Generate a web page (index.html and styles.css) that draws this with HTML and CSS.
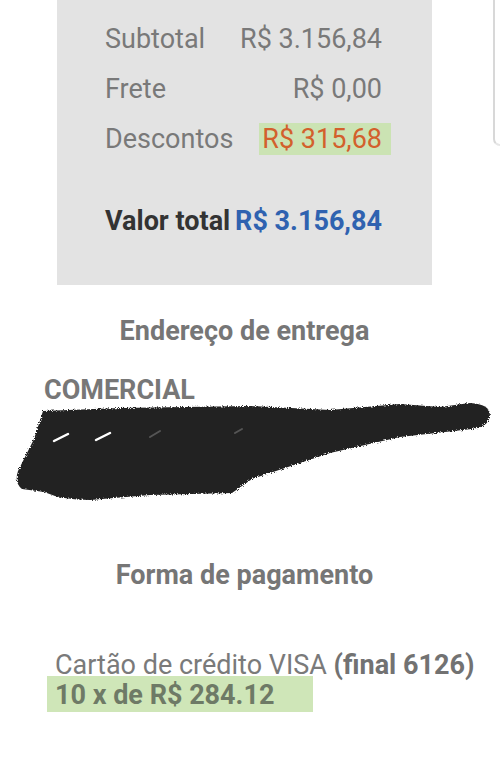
FILE: index.html
```html
<!DOCTYPE html>
<html>
<head lang="pt">
    <meta charset="UTF-8">
    <title>Resumo do pedido</title>
    <link rel="stylesheet" href="styles.css">
</head>
<body>
<div class="page">
    <!-- resumo de valores -->
    <div class="summary">
        <div class="row">
            <span>Subtotal</span>
            <span>R$ 3.156,84</span>
        </div>
        <div class="row">
            <span>Frete</span>
            <span>R$ 0,00</span>
        </div>
        <div class="row">
            <span>Descontos</span>
            <span><span class="discount">R$ 315,68</span></span>
        </div>
        <div class="row total">
            <span>Valor total</span>
            <span class="total-value">R$ 3.156,84</span>
        </div>
    </div>

    <h2 class="section-title title-address">Endereço de entrega</h2>
    <div class="address-name">COMERCIAL</div>
    <svg class="scribble" width="500" height="104" viewBox="0 0 500 104">
        <defs>
            <filter id="rough" x="-5%" y="-20%" width="110%" height="140%">
                <feTurbulence type="fractalNoise" baseFrequency="0.8" numOctaves="2" seed="3"/>
                <feDisplacementMap in="SourceGraphic" scale="4"/>
            </filter>
        </defs>
        <path filter="url(#rough)" fill="#222222"
              d="M43 10 L120 7 L250 5 L330 9 L400 3 L440 6 L470 2 Q490 3 490 14 Q489 26 472 28 L400 36 L330 52 L300 62 L252 78 L232 92 L150 94 L90 99 Q62 99 44 91 L22 88 Q14 82 18 70 L34 38 Z"/>
        <path d="M54 40 L68 33 M96 39 L110 32" stroke="#ffffff" stroke-width="2.5" stroke-linecap="round" fill="none"/>
        <path d="M150 36 L160 30 M235 32 L242 28" stroke="#555555" stroke-width="2" stroke-linecap="round" fill="none"/>
    </svg>

    <h2 class="section-title title-payment">Forma de pagamento</h2>
    <div class="payment">
        <div class="card">Cartão de crédito VISA <b>(final 6126)</b></div>
        <div class="installments"><span class="mark">10 x de R$ 284.12</span></div>
    </div>

    <div class="edge"></div>
</div>
</body>
</html>
```

FILE: styles.css
```css
*{
    margin: 0;
    padding: 0;
    box-sizing: border-box;
}
body {
    background: #fff;
    font-family: Roboto, "Noto Sans", sans-serif;
    color: #777;
}
.page {
    position: relative;
    width: 500px;
    height: 757px;
    overflow: hidden;
}

/* caixa cinza */
.summary {
    margin-left: 57px;
    width: 375px;
    height: 285px;
    padding: 14px 50px 0 48px;
    background-color: #e3e3e3;
}
.row {
    display: flex;
    justify-content: space-between;
    height: 50px;
    line-height: 50px;
    font-size: 27px;
    color: #797979;
}
.discount {
    color: #d3602c;
    background-color: #cbe3b3;
    padding: 0 9px 0 3px;
    margin-right: -9px;
}
.row.total {
    margin-top: 32px;
    font-size: 27px;
    font-weight: bold;
    color: #333;
}
.total-value {
    color: #2f62b0;
}

/* titulos */
.section-title {
    margin-left: 57px;
    width: 375px;
    text-align: center;
    font-size: 27px;
    line-height: 30px;
    font-weight: bold;
    color: #767676;
}
.title-address {
    margin-top: 31px;
}
.address-name {
    margin-top: 29px;
    padding-left: 44px;
    font-size: 27px;
    line-height: 30px;
    font-weight: bold;
    color: #777;
}
.scribble {
    display: block;
    margin-top: -4px;
}
.title-payment {
    margin-top: 55px;
}

/* pagamento */
.payment {
    margin-top: 60px;
    padding-left: 55px;
    font-size: 27px;
    line-height: 30px;
    color: #7a7a7a;
}
.card b {
    color: #727272;
}
.installments {
    font-weight: bold;
    color: #6e7a66;
}
.mark {
    background-color: #cfe6b8;
    padding: 3px 39px 1px 8px;
    margin-left: -8px;
}

/* borda da tela */
.edge {
    position: absolute;
    top: 0;
    left: 493px;
    width: 7px;
    height: 146px;
    border-left: 2px solid #d8d8d8;
    border-bottom: 2px solid #e6e6e6;
    border-bottom-left-radius: 7px;
}
```
